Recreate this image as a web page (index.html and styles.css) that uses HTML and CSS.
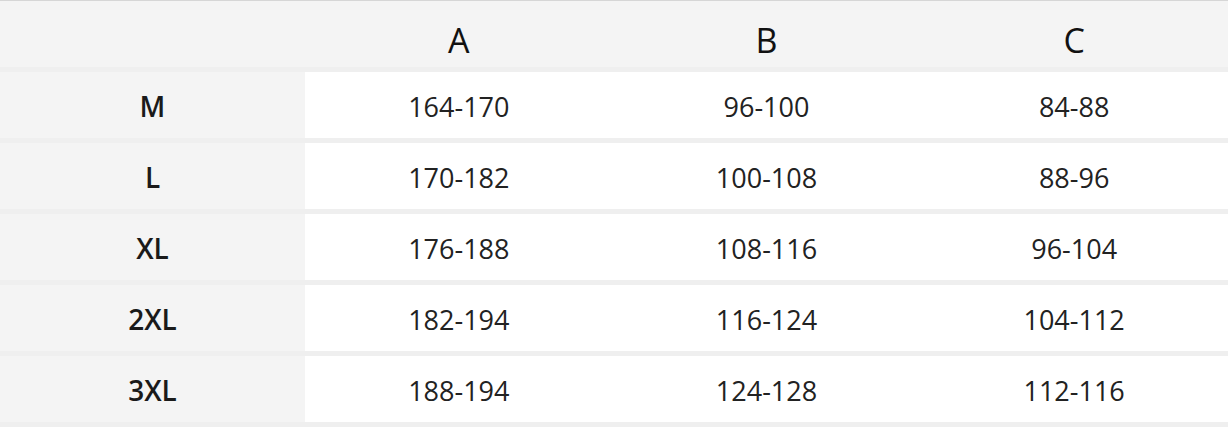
FILE: index.html
```html
<!DOCTYPE html>
<html>
<head>
<meta charset="utf-8">
<link rel="stylesheet" href="styles.css">
</head>
<body>
<div class="chart">
  <div class="row head">
    <div class="cell label"></div>
    <div class="cell col">A</div>
    <div class="cell col">B</div>
    <div class="cell col">C</div>
  </div>
  <div class="row">
    <div class="cell label">M</div>
    <div class="cell val">164-170</div>
    <div class="cell val">96-100</div>
    <div class="cell val">84-88</div>
  </div>
  <div class="row">
    <div class="cell label">L</div>
    <div class="cell val">170-182</div>
    <div class="cell val">100-108</div>
    <div class="cell val">88-96</div>
  </div>
  <div class="row">
    <div class="cell label">XL</div>
    <div class="cell val">176-188</div>
    <div class="cell val">108-116</div>
    <div class="cell val">96-104</div>
  </div>
  <div class="row">
    <div class="cell label">2XL</div>
    <div class="cell val">182-194</div>
    <div class="cell val">116-124</div>
    <div class="cell val">104-112</div>
  </div>
  <div class="row">
    <div class="cell label">3XL</div>
    <div class="cell val">188-194</div>
    <div class="cell val">124-128</div>
    <div class="cell val">112-116</div>
  </div>
</div>
</body>
</html>
```
FILE: styles.css
```css
html, body {
  margin: 0;
  padding: 0;
  background: #ffffff;
}
body {
  font-family: "Open Sans", "Liberation Sans", sans-serif;
  color: #1a1a1a;
}
.chart {
  width: 1228px;
  height: 427px;
  box-sizing: border-box;
  border-top: 1px solid #d6d6d6;
  background: #efefef;
  display: flex;
  flex-direction: column;
  gap: 5px;
}
.row {
  display: grid;
  grid-template-columns: 305px 1fr 1fr 1fr;
  height: 66px;
}
.cell {
  display: flex;
  align-items: center;
  justify-content: center;
}
.label {
  background: #f4f4f4;
  font-size: 28px;
  font-weight: 600;
  color: #1a1a1a;
  padding-top: 2px;
  box-sizing: border-box;
}
.val {
  background: #ffffff;
  font-size: 27px;
  color: #222;
  padding-top: 2px;
  box-sizing: border-box;
}
.head .cell {
  background: #f4f4f4;
}
.col {
  font-size: 34px;
  color: #111;
  padding-top: 12px;
  box-sizing: border-box;
}
```
